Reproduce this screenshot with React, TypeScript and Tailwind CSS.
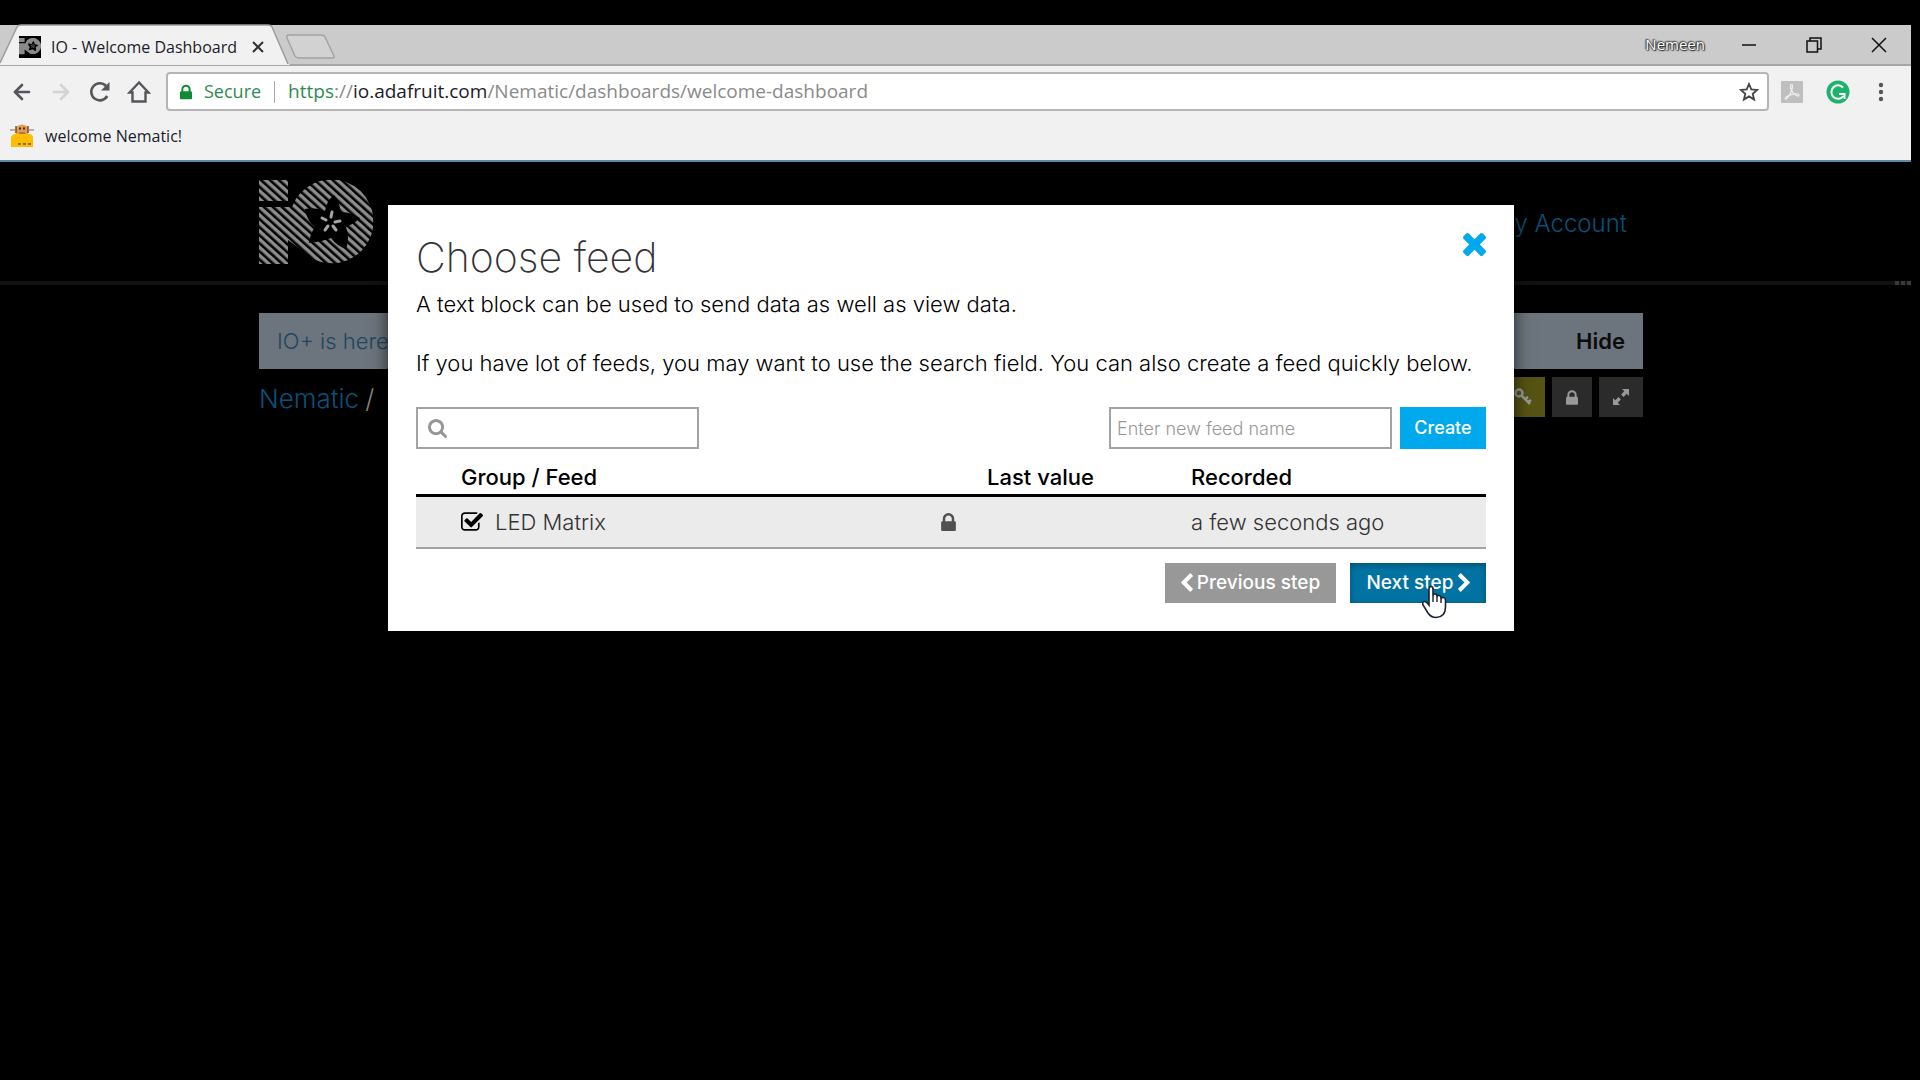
import { useState } from "react";
import type { ReactNode } from "react";
import { ArrowLeft, ArrowRight } from "lucide-react";

const paths = {
  lock: {
    box: "320 128 1152 1408",
    d: "M640 768h512v-192q0-106-75-181t-181-75-181 75-75 181v192zm832 96v576q0 40-28 68t-68 28h-960q-40 0-68-28t-28-68v-576q0-40 28-68t68-28h32v-192q0-184 132-316t316-132 316 132 132 316v192h32q40 0 68 28t28 68z",
  },
  search: {
    box: "64 128 1664 1664",
    d: "M1216 832q0-185-131.5-316.5t-316.5-131.5-316.5 131.5-131.5 316.5 131.5 316.5 316.5 131.5 316.5-131.5 131.5-316.5zm512 832q0 52-38 90t-90 38q-54 0-90-38l-343-342q-179 124-399 124-143 0-273.5-55.5t-225-150-150-225-55.5-273.5 55.5-273.5 150-225 225-150 273.5-55.5 273.5 55.5 225 150 150 225 55.5 273.5q0 220-124 399l343 343q37 37 37 90z",
  },
  check: {
    box: "64 128 1664 1408",
    d: "M1472 930v318q0 119-84.5 203.5t-203.5 84.5h-832q-119 0-203.5-84.5t-84.5-203.5v-832q0-119 84.5-203.5t203.5-84.5h832q63 0 117 25 15 7 18 23 3 17-9 29l-49 49q-10 10-23 10-3 0-9-2-23-6-45-6h-832q-66 0-113 47t-47 113v832q0 66 47 113t113 47h832q66 0 113-47t47-113v-254q0-13 9-22l64-64q10-10 23-10 6 0 12 3 20 8 20 29zm231-489l-814 814q-24 24-57 24t-57-24l-430-430q-24-24-24-57t24-57l110-110q24-24 57-24t57 24l263 263 647-647q24-24 57-24t57 24l110 110q24 24 24 57t-24 57z",
  },
  times: {
    box: "302 366 1188 1188",
    d: "M1490 1322q0 40-28 68l-136 136q-28 28-68 28t-68-28l-294-294-294 294q-28 28-68 28t-68-28l-136-136q-28-28-28-68t28-68l294-294-294-294q-28-28-28-68t28-68l136-136q28-28 68-28t68 28l294 294 294-294q28-28 68-28t68 28l136 136q28 28 28 68t-28 68l-294 294 294 294q28 28 28 68z",
  },
  chevron: {
    box: "340 26 1048 1612",
    d: "M1363 877l-742 742q-19 19-45 19t-45-19l-166-166q-19-19-19-45t19-45l531-531-531-531q-19-19-19-45t19-45l166-166q19-19 45-19t45 19l742 742q19 19 19 45t-19 45z",
  },
};

function Icon({ name, className }: { name: keyof typeof paths; className: string }) {
  return (
    <svg viewBox={paths[name].box} className={className} fill="currentColor" aria-hidden="true">
      <path d={paths[name].d} />
    </svg>
  );
}

function Logo({ className, striped }: { className: string; striped?: boolean }) {
  const fill = striped ? "url(#stripes)" : "#8a8a8a";
  return (
    <svg viewBox="0 0 114 84" className={className} aria-hidden="true">
      <defs>
        <pattern id="stripes" width="6" height="6" patternUnits="userSpaceOnUse" patternTransform="rotate(42)">
          <rect width="6" height="3.4" fill="#8d8d8d" />
        </pattern>
      </defs>
      <path d="M0 0h29v21H0zM0 27h33A42 42 0 1 1 56 80L29 60V84H0z" fill={fill} />
      <path
        d="M75 15Q80 20 82 32Q92 32 101 38Q95 44 87 47Q91 58 87 69Q78 66 72 58Q62 62 50 63Q51 54 56 47Q48 41 46 29Q57 27 66 31Q68 20 75 15Z"
        fill="#000"
      />
      <g stroke="#a5a5a5" strokeWidth="3" strokeLinecap="round">
        <path d="M72 37l1-5M76 42l5-1M74 46l3 4M69 46l-3 4M67 40l-4-2" />
      </g>
    </svg>
  );
}

function Robot() {
  return (
    <svg viewBox="0 0 24 23" className="h-[23px] w-6" aria-hidden="true">
      <path d="M6 3q6-5 12 0v8H6z" fill="#dda05a" />
      <path d="M0 6h5M19 6h5" stroke="#8a6a4b" />
      <path d="M6 2v7M18 2v7" stroke="#8a4a12" strokeWidth="1.5" />
      <path d="M9 9h6" stroke="#b06a2a" strokeWidth="1.5" />
      <path d="M9 4.500h2M13 4.500h2" stroke="#4a2a10" strokeWidth="2" />
      <path d="M1 23V14q0-3 4-4h14q4 0 4 4v9z" fill="#fdbd00" />
      <path d="M8 20h3M13 20h3M18 20h3" stroke="#9a6a00" strokeWidth="2" />
    </svg>
  );
}

function TabStrip() {
  return (
    <div className="flex h-[41px] items-center border-b-2 border-[#a6a6a6] bg-[#cbcbcb]">
      <div className="relative flex h-[41px] w-[290px] shrink-0 items-center pt-1 pl-[19px]">
        <svg viewBox="0 0 290 41" className="absolute top-0 left-0 h-[41px] w-[290px]" aria-hidden="true">
          <path d="M0 41V39L17 3Q18 1 21 1H268Q271 1 272 3L288 39L290 41z" fill="#f1f1f1" />
          <path d="M0 39L17 3Q18 1 21 1H268Q271 1 272 3L288 40" fill="none" stroke="#9c9c9c" strokeWidth="1.5" />
        </svg>
        <span className="relative flex h-[22px] w-[22px] items-center bg-black">
          <Logo className="w-[22px]" />
        </span>
        <span className="relative ml-2.5 w-[200px] text-base whitespace-nowrap text-[#1b1b2b]">IO - Welcome Dashboard</span>
        <button className="relative" aria-label="Close tab">
          <svg viewBox="0 0 14 14" className="size-3.5" stroke="#333" strokeWidth="2">
            <path d="M2 2l10 10M12 2L2 12" />
          </svg>
        </button>
      </div>
      <button className="-ml-1 pt-1" aria-label="New tab">
        <svg viewBox="0 0 50 26" className="h-[26px] w-[50px]" fill="#d2d2d2" stroke="#a3a3a3" strokeWidth="1.5">
          <path d="M3 1H35Q38 1 39 3L48 22Q49 24 46 24H13Q10 24 9 22L1 4Q0 1 3 1z" />
        </svg>
      </button>
      <span className="ml-auto text-[15px] text-white [text-shadow:0_0_2px_#222,0_0_2px_#222,1px_1px_1px_#444,-1px_-1px_1px_#666]">Nemeen</span>
      <div className="ml-9 flex items-center gap-[49px] pr-6">
        <button aria-label="Minimize">
          <svg viewBox="0 0 16 16" className="size-4" stroke="#111" strokeWidth="1.5">
            <path d="M1 8h14" />
          </svg>
        </button>
        <button aria-label="Restore">
          <svg viewBox="0 0 16 16" className="size-4" fill="none" stroke="#111" strokeWidth="1.5">
            <path d="M1 4h10.5v11H1zM4 4V1h11v11h-3.5" />
          </svg>
        </button>
        <button aria-label="Close window">
          <svg viewBox="0 0 16 16" className="size-4" stroke="#111" strokeWidth="1.5">
            <path d="M1 1l14 14M15 1L1 15" />
          </svg>
        </button>
      </div>
    </div>
  );
}

function Toolbar() {
  return (
    <div className="flex items-center bg-[#f1f1f1] pt-[6px] pr-[27px] pl-2.5">
      <div className="flex shrink-0 items-center gap-[15px] text-[#55565b]">
        <button aria-label="Back">
          <ArrowLeft className="size-6" strokeWidth={2.6} />
        </button>
        <button aria-label="Forward" className="text-[#d3d3d5]">
          <ArrowRight className="size-6" strokeWidth={2.6} />
        </button>
        <button aria-label="Reload">
          <svg viewBox="0 0 24 24" className="size-6" fill="none" stroke="currentColor" strokeWidth="2.6">
            <path d="M19.2 16A8.5 8.5 0 1 1 18 6" />
            <path d="M21.5 2v8.500h-8.500z" fill="currentColor" stroke="none" />
          </svg>
        </button>
        <button aria-label="Home">
          <svg viewBox="0 0 24 24" className="size-6" fill="none" stroke="currentColor" strokeWidth="2.4">
            <path d="M12 2.500L2.500 12.500H5.500V21.500H18.500V12.500H21.500z" />
          </svg>
        </button>
      </div>
      <div className="ml-[15px] flex h-[39px] flex-1 items-center rounded border-2 border-[#b5b5b5] bg-white pr-2 pl-3 text-[19px]">
        <Icon name="lock" className="h-4 w-3 text-[#138a36]" />
        <span className="ml-3 text-[18px] text-[#2f8a52]">Secure</span>
        <span className="mx-[13px] h-[22px] w-px bg-[#a8a8a8]" />
        <span className="flex-1 whitespace-nowrap text-[#8a8a8a]">
          <span className="text-[#2f8a52]">https</span>://<span className="text-[#1b1b2b]">io.adafruit.com</span>
          /Nematic/dashboards/welcome-dashboard
        </span>
        <button aria-label="Bookmark this page">
          <svg viewBox="0 0 20 20" className="size-5" fill="none" stroke="#444" strokeWidth="1.8">
            <path d="M10 2l2.300 5.400 5.900.5-4.500 3.900 1.400 5.700L10 14.400l-5.100 3.100 1.400-5.700L1.800 7.900l5.900-.5z" />
          </svg>
        </button>
      </div>
      <div className="flex shrink-0 items-center pl-3">
        <button aria-label="Adobe Acrobat">
          <svg viewBox="0 0 22 22" className="size-[22px]" fill="none">
            <path d="M0 0h22v22H0z" fill="#bfbfbf" />
            <path
              d="M10 3.500c2-.8 1.700 2.500.8 5.300C9.500 13 6.500 18 4.800 18c-2-.6 2-3.800 6.200-4.700 3.500-.8 7-.6 7 1 0 2-5-.3-7.300-4.500C9.500 7.500 9 4.200 10 3.500z"
              stroke="#ededed"
              strokeWidth="1.3"
            />
          </svg>
        </button>
        <button className="ml-[23px]" aria-label="Grammarly">
          <svg viewBox="0 0 24 24" className="size-6" fill="none">
            <circle cx="12" cy="12" r="11.500" fill="#1fb26b" />
            <path d="M17 7.500A6.700 6.700 0 1 0 17.500 16" stroke="#fff" strokeWidth="2" />
            <path d="M13 14h5.500v5" stroke="#fff" strokeWidth="2" />
          </svg>
        </button>
        <button className="ml-7" aria-label="Menu">
          <svg viewBox="0 0 6 20" className="h-5 w-1.5" fill="#55565b">
            <circle cx="3" cy="3" r="2.200" />
            <circle cx="3" cy="10" r="2.200" />
            <circle cx="3" cy="17" r="2.200" />
          </svg>
        </button>
      </div>
    </div>
  );
}

function SquareButton({ label, className, children }: { label: string; className: string; children: ReactNode }) {
  return (
    <button aria-label={label} className={`flex h-10 items-center justify-center text-[#999] ${className}`}>
      {children}
    </button>
  );
}

function Dashboard() {
  return (
    <div>
      <header className="flex h-[119px] justify-between pt-[18px] pr-[268px] pl-[259px]">
        <Logo striped className="h-[84px] w-[114px]" />
        <a href="#account" className="pt-7 pr-4 text-[24px] leading-8 font-light text-[#0b5078]">
          My Account
        </a>
      </header>
      <div className="flex h-1 justify-end gap-0.5 bg-[#121212]">
        <span className="w-1 bg-[#3a3a3a]" />
        <span className="w-1 bg-[#3a3a3a]" />
        <span className="w-1 bg-[#3a3a3a]" />
      </div>
      <div className="pt-7 pr-[268px] pl-[259px]">
        <div className="flex h-14 items-center justify-between bg-[#6c757d] px-[18px] text-[22px]">
          <a href="#plus" className="font-light text-[#1f4660]">
            IO+ is here
          </a>
          <button className="font-semibold text-[#0c0c0c]">Hide</button>
        </div>
        <div className="flex items-center justify-between pt-1.5">
          <nav className="pt-1 text-[26px] leading-10 font-light text-[#0b5078]">
            <a href="#user">Nematic</a>
            <span className="ml-1.5 text-[#8a8580]">/</span>
          </nav>
          <div className="flex gap-[7px]">
            <SquareButton label="Keys" className="w-11 bg-[#575314]">
              <svg viewBox="0 0 18 18" className="size-[18px]" fill="none" stroke="currentColor" strokeWidth="2.500">
                <circle cx="5" cy="5" r="3.500" />
                <path d="M7.500 7.500L16 16M11 11l3-2M14 14l3-2" />
              </svg>
            </SquareButton>
            <SquareButton label="Privacy" className="w-10 bg-[#2b2b2b]">
              <Icon name="lock" className="h-[15px] w-3" />
            </SquareButton>
            <SquareButton label="Fullscreen" className="w-11 bg-[#2b2b2b]">
              <svg viewBox="0 0 16 16" className="size-4" fill="currentColor">
                <path d="M9 0h7v7l-2.300-2.300-3.200 3.200-2.400-2.400 3.200-3.200zM7 16H0V9l2.300 2.300 3.200-3.200 2.400 2.400-3.200 3.200z" />
              </svg>
            </SquareButton>
          </div>
        </div>
      </div>
    </div>
  );
}

function HandCursor() {
  return (
    <svg viewBox="0 0 26 34" className="pointer-events-none absolute top-[22px] left-[71px] h-[34px] w-[26px]" aria-hidden="true">
      <path
        d="M8 20V4Q8 1.500 10 1.500Q12 1.500 12 4V11Q12 9 14 9Q16 9 16 11V12Q16.500 10 18.300 10.500Q20 11 20 13V14Q20.500 12 22.500 12.500Q24.500 13 24.500 15V22Q24.500 32 15 32.500Q10 32.500 7 28L2 20Q1 17 3 16.500Q5 16 8 20z"
        fill="#fff"
        stroke="#1d2233"
        strokeWidth="1.6"
      />
      <path d="M12 11v6M16 12v5M20 14v4" stroke="#1d2233" strokeWidth="1.4" />
    </svg>
  );
}

function ChooseFeed() {
  const [selected, setSelected] = useState(true);

  return (
    <div
      role="dialog"
      aria-labelledby="choose-feed"
      className="w-[1126px] max-w-full bg-white p-7 text-[22px] leading-[30px] text-black shadow-[0_0_16px_rgba(0,0,0,0.7)]"
    >
      <div className="flex items-start justify-between">
        <h1 id="choose-feed" className="text-[41px] leading-12 font-extralight text-[#333]">
          Choose feed
        </h1>
        <button aria-label="Close" className="text-[#00a9ec]">
          <Icon name="times" className="size-[23px]" />
        </button>
      </div>
      <p className="mt-2 font-light">A text block can be used to send data as well as view data.</p>
      <p className="mt-[29px] font-light whitespace-nowrap">
        If you have lot of feeds, you may want to use the search field. You can also create a feed quickly below.
      </p>

      <div className="mt-[29px] flex text-[18px]">
        <label className="flex h-[42px] w-[283px] items-center border-2 border-[#a3a3a3] pl-2.5">
          <Icon name="search" className="size-[19px] shrink-0 text-[#969696]" />
          <input aria-label="Search feeds" className="ml-2 w-full outline-none" />
        </label>
        <input
          aria-label="New feed name"
          placeholder="Enter new feed name"
          className="ml-auto h-[42px] w-[283px] border-2 border-[#a3a3a3] px-1.5 font-light outline-none placeholder:text-[#999]"
        />
        <button className="ml-2 h-[42px] w-[86px] bg-[#00a9ec] font-medium text-white">Create</button>
      </div>

      <table className="w-full table-fixed text-left">
        <colgroup>
          <col className="w-[45px]" />
          <col className="w-[480px]" />
          <col className="w-[46px]" />
          <col className="w-[204px]" />
          <col />
        </colgroup>
        <thead>
          <tr className="border-b-3 border-black">
            <th />
            <th className="pt-[13px] pb-0.5 font-medium">Group / Feed</th>
            <th />
            <th className="pt-[13px] pb-0.5 font-medium">Last value</th>
            <th className="pt-[13px] pb-0.5 font-medium">Recorded</th>
          </tr>
        </thead>
        <tbody>
          <tr className="h-[52px] border-b-2 border-[#a3a3a3] bg-[#ebebeb] font-light text-[#333]">
            <td />
            <td>
              <label className="flex items-center">
                <input type="checkbox" className="peer sr-only" checked={selected} onChange={(e) => setSelected(e.target.checked)} />
                <Icon name="check" className="h-[19px] w-[22px] text-black" />
                <span className="ml-3">LED Matrix</span>
              </label>
            </td>
            <td>
              <Icon name="lock" className="h-[18px] w-[15px] text-[#505050]" />
            </td>
            <td />
            <td>a few seconds ago</td>
          </tr>
        </tbody>
      </table>

      <div className="mt-[14px] flex justify-end gap-[14px] text-[19px] font-medium text-white">
        <button className="flex h-10 w-[171px] items-center justify-center gap-1 bg-[#989898] whitespace-nowrap">
          <Icon name="chevron" className="h-[19px] w-3 rotate-180" />
          Previous step
        </button>
        <div className="relative">
          <button className="flex h-10 w-[136px] items-center justify-center gap-1 bg-[#0073a2] whitespace-nowrap shadow-[inset_0_2px_6px_rgba(0,0,0,0.3)]">
            Next step
            <Icon name="chevron" className="h-[19px] w-3" />
          </button>
          <HandCursor />
        </div>
      </div>
    </div>
  );
}

export default function App() {
  return (
    <div className="min-h-screen bg-black pt-[25px] pr-[9px]">
      <div className="font-['Open_Sans',sans-serif]">
        <TabStrip />
        <Toolbar />
        <div className="flex h-[51px] items-center gap-[11px] border-b-2 border-[#5d8ba6] bg-[#f1f1f1] pl-2.5 text-base text-[#1b1b2b]">
          <Robot />
          <a href="#bookmark">welcome Nematic!</a>
        </div>
      </div>
      <main className="relative font-['Inter',sans-serif]">
        <Dashboard />
        <div className="absolute inset-x-0 top-[43px] flex justify-center pr-[9px]">
          <ChooseFeed />
        </div>
      </main>
    </div>
  );
}
